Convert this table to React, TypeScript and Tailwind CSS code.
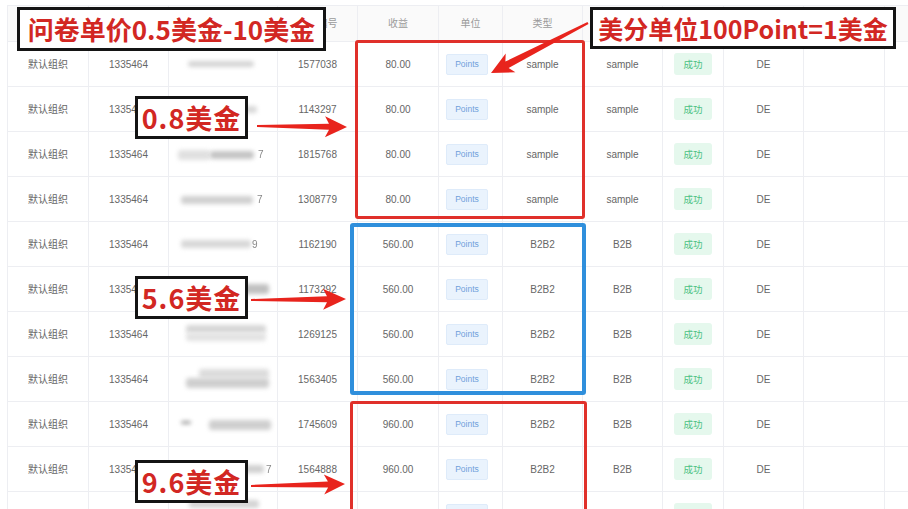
import React from "react";

type Bar = { l: number; t: number; w: number; h: number; c: string };
type Row = {
  id: string;
  amount: string;
  type1: string;
  type2: string;
  bars: Bar[];
  suffix?: { ch: string; l: number };
};

const rows: Row[] = [
  { id: "1577038", amount: "80.00", type1: "sample", type2: "sample", bars: [{ l: 19, t: 19, w: 66, h: 6, c: "#d4d4d4" }] },
  { id: "1143297", amount: "80.00", type1: "sample", type2: "sample", bars: [{ l: 20, t: 19, w: 68, h: 7, c: "#d8d8d8" }] },
  {
    id: "1815768", amount: "80.00", type1: "sample", type2: "sample",
    bars: [{ l: 9, t: 18, w: 32, h: 10, c: "#e0e0e0" }, { l: 41, t: 19, w: 44, h: 8, c: "#c4c4c4" }],
    suffix: { ch: "7", l: 89 },
  },
  { id: "1308779", amount: "80.00", type1: "sample", type2: "sample", bars: [{ l: 12, t: 19, w: 72, h: 8, c: "#d0d0d0" }], suffix: { ch: "7", l: 88 } },
  { id: "1162190", amount: "560.00", type1: "B2B2", type2: "B2B", bars: [{ l: 12, t: 18, w: 70, h: 8, c: "#d8d8d8" }], suffix: { ch: "9", l: 83 } },
  { id: "1173292", amount: "560.00", type1: "B2B2", type2: "B2B", bars: [{ l: 20, t: 17, w: 80, h: 10, c: "#c0c0c0" }] },
  { id: "1269125", amount: "560.00", type1: "B2B2", type2: "B2B", bars: [{ l: 17, t: 13, w: 80, h: 8, c: "#d6d6d6" }, { l: 17, t: 21, w: 80, h: 8, c: "#e2e2e2" }] },
  { id: "1563405", amount: "560.00", type1: "B2B2", type2: "B2B", bars: [{ l: 30, t: 12, w: 70, h: 9, c: "#dcdcdc" }, { l: 17, t: 21, w: 83, h: 10, c: "#cfcfcf" }] },
  { id: "1745609", amount: "960.00", type1: "B2B2", type2: "B2B", bars: [{ l: 12, t: 19, w: 10, h: 3, c: "#9a9a9a" }, { l: 40, t: 18, w: 62, h: 10, c: "#cfcfcf" }] },
  { id: "1564888", amount: "960.00", type1: "B2B2", type2: "B2B", bars: [{ l: 15, t: 18, w: 80, h: 8, c: "#d0d0d0" }], suffix: { ch: "7", l: 97 } },
  { id: "1520433", amount: "960.00", type1: "B2B2", type2: "B2B", bars: [{ l: 20, t: 8, w: 70, h: 8, c: "#d4d4d4" }] },
];

const headers = ["组织", "用户ID", "用户名", "项目编号", "收益", "单位", "类型", "项目类型", "状态", "国家", "时间", "操作"];

function arrowPoints(x1: number, y1: number, x2: number, y2: number, tailW: number, shaftW: number, headW: number, headL: number) {
  const dx = x2 - x1;
  const dy = y2 - y1;
  const L = Math.hypot(dx, dy);
  const ux = dx / L;
  const uy = dy / L;
  const nx = -uy;
  const ny = ux;
  const bx = x2 - ux * headL;
  const by = y2 - uy * headL;
  const jx = bx + ux * 4;
  const jy = by + uy * 4;
  const p = (x: number, y: number) => `${x.toFixed(1)},${y.toFixed(1)}`;
  return [
    p(x1 + (nx * tailW) / 2, y1 + (ny * tailW) / 2),
    p(jx + (nx * shaftW) / 2, jy + (ny * shaftW) / 2),
    p(bx + (nx * headW) / 2, by + (ny * headW) / 2),
    p(x2, y2),
    p(bx - (nx * headW) / 2, by - (ny * headW) / 2),
    p(jx - (nx * shaftW) / 2, jy - (ny * shaftW) / 2),
    p(x1 - (nx * tailW) / 2, y1 - (ny * tailW) / 2),
  ].join(" ");
}

const cell = "h-[45px] flex items-center justify-center border-r border-b border-[#edeef2] text-[10px] text-[#666]";

export default function App() {
  return (
    <div className="relative w-[908px] h-[509px] overflow-hidden bg-white font-['Liberation_Sans','Noto_Sans_CJK_SC',sans-serif]">
      <div className="pt-[5px] pl-[7px]">
        <div className="grid grid-cols-[81px_80px_109px_80px_81px_64px_80px_80px_61px_80px_81px_100px] w-max border-l border-t border-[#edeef2]">
          {headers.map((h) => (
            <div key={h} className="h-[36px] flex items-center justify-center border-r border-b border-[#edeef2] bg-[#fafafa] text-[10px] text-[#9a9a9a]">
              {h}
            </div>
          ))}
          {rows.map((r, i) => (
            <React.Fragment key={i}>
              <div className={cell}>默认组织</div>
              <div className={cell}>1335464</div>
              <div className="h-[45px] relative border-r border-b border-[#edeef2]">
                {r.bars.map((b, j) => (
                  <div
                    key={j}
                    className="absolute blur-[2px] rounded-[3px]"
                    style={{ left: b.l, top: b.t, width: b.w, height: b.h, background: b.c }}
                  />
                ))}
                {r.suffix && (
                  <span className="absolute top-[15px] text-[10px] text-[#888] blur-[0.6px]" style={{ left: r.suffix.l }}>
                    {r.suffix.ch}
                  </span>
                )}
              </div>
              <div className={cell}>{r.id}</div>
              <div className={cell}>{r.amount}</div>
              <div className="h-[45px] flex items-center justify-start pl-[7px] border-r border-b border-[#edeef2]">
                <span className="w-[42px] h-[21px] flex items-center justify-center rounded-[2px] bg-[#eaf3fd] border border-[#deebfa] text-[8.5px] text-[#6f9fdb]">
                  Points
                </span>
              </div>
              <div className={cell}>{r.type1}</div>
              <div className={cell}>{r.type2}</div>
              <div className="h-[45px] flex items-center justify-center border-r border-b border-[#edeef2]">
                <span className="w-[38px] h-[22px] flex items-center justify-center rounded-[3px] bg-[#e5f8ed] text-[9.5px] text-[#4cc182] font-['Noto_Sans_CJK_SC',sans-serif]">
                  成功
                </span>
              </div>
              <div className={cell}>DE</div>
              <div className={cell}></div>
              <div className={cell}></div>
            </React.Fragment>
          ))}
        </div>
      </div>

      {/* highlight frames */}
      <div className="absolute left-[355px] top-[40px] w-[230px] h-[179px] border-[3px] border-[#e0302a] rounded-[3px]" />
      <div className="absolute left-[350px] top-[223px] w-[236px] h-[172px] border-[4px] border-[#2f8fdc] rounded-[3px]" />
      <div className="absolute left-[350px] top-[401px] w-[237px] h-[130px] border-[3px] border-[#e0302a] rounded-[3px]" />

      {/* arrows */}
      <svg className="absolute left-0 top-0" width="908" height="509" viewBox="0 0 908 509">
        <polygon points={arrowPoints(588, 23, 491, 73, 2, 7, 21, 22)} fill="#e8241d" />
        <polygon points={arrowPoints(257, 126, 347, 127, 2, 6, 21, 22)} fill="#e8241d" />
        <polygon points={arrowPoints(251, 300, 346, 299, 2, 6, 21, 23)} fill="#e8241d" />
        <polygon points={arrowPoints(251, 486, 345, 484, 2, 6, 20, 21)} fill="#e8241d" />
      </svg>

      {/* labels */}
      <div className="absolute left-[17px] top-[7px] w-[309px] h-[44px] flex items-center justify-center border-[3px] border-[#141414] bg-white text-[26px] leading-none font-bold text-[#d22723] font-['Noto_Sans_CJK_SC',sans-serif]">
        问卷单价0.5美金-10美金
      </div>
      <div className="absolute left-[590px] top-[7px] w-[306px] h-[42px] flex items-center justify-center border-[3px] border-[#141414] bg-white text-[25px] leading-none font-bold text-[#d22723] font-['Noto_Sans_CJK_SC',sans-serif]">
        美分单位100Point=1美金
      </div>
      <div className="absolute left-[135px] top-[96px] w-[113px] h-[43px] flex items-center justify-center border-[3px] border-[#141414] bg-white text-[27px] leading-none font-bold tracking-[1px] text-[#d22723] font-['Noto_Sans_CJK_SC',sans-serif]">
        0.8美金
      </div>
      <div className="absolute left-[135px] top-[276px] w-[113px] h-[43px] flex items-center justify-center border-[3px] border-[#141414] bg-white text-[27px] leading-none font-bold tracking-[1px] text-[#d22723] font-['Noto_Sans_CJK_SC',sans-serif]">
        5.6美金
      </div>
      <div className="absolute left-[135px] top-[460px] w-[113px] h-[43px] flex items-center justify-center border-[3px] border-[#141414] bg-white text-[27px] leading-none font-bold tracking-[1px] text-[#d22723] font-['Noto_Sans_CJK_SC',sans-serif]">
        9.6美金
      </div>
    </div>
  );
}
